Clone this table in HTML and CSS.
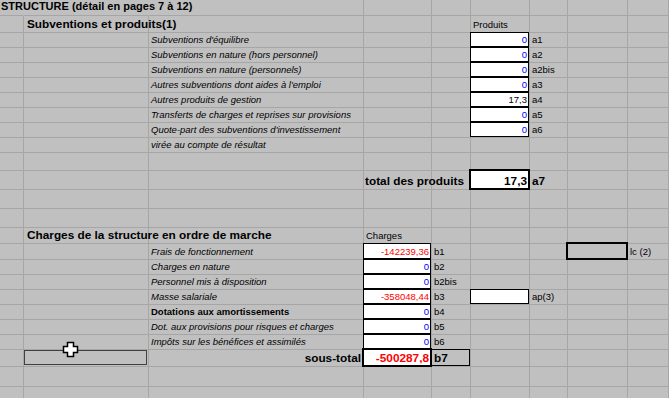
FILE: index.html
```html
<!DOCTYPE html>
<html lang="fr">

<head>
    <meta charset="UTF-8">
    <title>Structure - détail</title>
    <link rel="stylesheet" href="styles.css">
</head>

<body>

    <div class="page">
        <table class="sheet">
            <colgroup>
                <col style="width: 24px">
                <col style="width: 125px">
                <col style="width: 215px">
                <col style="width: 68px">
                <col style="width: 39px">
                <col style="width: 59px">
                <col style="width: 38px">
                <col style="width: 60px">
                <col style="width: 41px">
            </colgroup>

            <!-- en-tête -->
            <tr class="r16">
                <td class="title ov">STRUCTURE (détail en pages 7 à 12)</td>
                <td class="ov"></td><td></td><td></td><td></td><td></td><td></td><td></td><td></td>
            </tr>
            <tr class="r17">
                <td></td>
                <td class="head">Subventions et produits(1)</td>
                <td></td><td></td><td></td>
                <td>Produits</td>
                <td></td><td></td><td></td>
            </tr>

            <!-- produits -->
            <tr class="r15">
                <td></td><td></td>
                <td class="it">Subventions d'équilibre</td>
                <td></td><td></td>
                <td class="box num">0</td>
                <td>a1</td><td></td><td></td>
            </tr>
            <tr class="r15">
                <td></td><td></td>
                <td class="it">Subventions en nature (hors personnel)</td>
                <td></td><td></td>
                <td class="box num">0</td>
                <td>a2</td><td></td><td></td>
            </tr>
            <tr class="r15">
                <td></td><td></td>
                <td class="it">Subventions en nature (personnels)</td>
                <td></td><td></td>
                <td class="box num">0</td>
                <td>a2bis</td><td></td><td></td>
            </tr>
            <tr class="r15">
                <td></td><td></td>
                <td class="it">Autres subventions dont aides à l'emploi</td>
                <td></td><td></td>
                <td class="box num">0</td>
                <td>a3</td><td></td><td></td>
            </tr>
            <tr class="r15">
                <td></td><td></td>
                <td class="it">Autres produits de gestion</td>
                <td></td><td></td>
                <td class="box num pos">17,3</td>
                <td>a4</td><td></td><td></td>
            </tr>
            <tr class="r15">
                <td></td><td></td>
                <td class="it">Transferts de charges et reprises sur provisions</td>
                <td></td><td></td>
                <td class="box num">0</td>
                <td>a5</td><td></td><td></td>
            </tr>
            <tr class="r15">
                <td></td><td></td>
                <td class="it">Quote-part des subventions d'investissement</td>
                <td></td><td></td>
                <td class="box num">0</td>
                <td>a6</td><td></td><td></td>
            </tr>
            <tr class="r15">
                <td></td><td></td>
                <td class="it">virée au compte de résultat</td>
                <td></td><td></td><td></td><td></td><td></td><td></td>
            </tr>
            <tr class="r18">
                <td></td><td></td><td></td><td></td><td></td><td></td><td></td><td></td><td></td>
            </tr>
            <tr class="r19">
                <td></td><td></td><td></td><td></td>
                <td class="total sum-label"><div class="right">total des produits</div></td>
                <td class="box thick num total pos">17,3</td>
                <td class="total">a7</td>
                <td></td><td></td>
            </tr>
            <tr class="r19">
                <td></td><td></td><td></td><td></td><td></td><td></td><td></td><td></td><td></td>
            </tr>
            <tr class="r19">
                <td></td><td></td><td></td><td></td><td></td><td></td><td></td><td></td><td></td>
            </tr>

            <!-- charges -->
            <tr class="r16">
                <td></td>
                <td class="head">Charges de la structure en ordre de marche</td>
                <td></td>
                <td>Charges</td>
                <td></td><td></td><td></td><td></td><td></td>
            </tr>
            <tr class="r16">
                <td></td><td></td>
                <td class="it">Frais de fonctionnement</td>
                <td class="box num neg">-142239,36</td>
                <td>b1</td>
                <td></td><td></td>
                <td class="box thick grey"></td>
                <td>lc (2)</td>
            </tr>
            <tr class="r15">
                <td></td><td></td>
                <td class="it">Charges en nature</td>
                <td class="box num">0</td>
                <td>b2</td>
                <td></td><td></td><td></td><td></td>
            </tr>
            <tr class="r15">
                <td></td><td></td>
                <td class="it">Personnel mis à disposition</td>
                <td class="box num">0</td>
                <td>b2bis</td>
                <td></td><td></td><td></td><td></td>
            </tr>
            <tr class="r15">
                <td></td><td></td>
                <td class="it">Masse salariale</td>
                <td class="box num neg">-358048,44</td>
                <td>b3</td>
                <td class="box"></td>
                <td>ap(3)</td>
                <td></td><td></td>
            </tr>
            <tr class="r15">
                <td></td><td></td>
                <td class="strong">Dotations aux amortissements</td>
                <td class="box num">0</td>
                <td>b4</td>
                <td></td><td></td><td></td><td></td>
            </tr>
            <tr class="r15">
                <td></td><td></td>
                <td class="it">Dot. aux provisions pour risques et charges</td>
                <td class="box num">0</td>
                <td>b5</td>
                <td></td><td></td><td></td><td></td>
            </tr>
            <tr class="r15">
                <td></td><td></td>
                <td class="it">Impôts sur les bénéfices et assimilés</td>
                <td class="box num">0</td>
                <td>b6</td>
                <td></td><td></td><td></td><td></td>
            </tr>
            <tr class="r17">
                <td></td>
                <td class="sel"></td>
                <td class="total"><div class="right">sous-total</div></td>
                <td class="box thick num neg total">-500287,8</td>
                <td class="box label total">b7</td>
                <td></td><td></td><td></td><td></td>
            </tr>
            <tr class="r20">
                <td></td><td></td><td></td><td></td><td></td><td></td><td></td><td></td><td></td>
            </tr>
            <tr class="r20">
                <td></td><td></td><td></td><td></td><td></td><td></td><td></td><td></td><td></td>
            </tr>
        </table>

        <!-- pointeur de sélection -->
        <svg class="cursor" width="17" height="17" viewBox="0 0 17 17">
            <polygon points="5.5,1.5 11.5,1.5 11.5,5.5 15.5,5.5 15.5,11.5 11.5,11.5 11.5,15.5 5.5,15.5 5.5,11.5 1.5,11.5 1.5,5.5 5.5,5.5"
                fill="#fff" stroke="#000" stroke-width="1.5" stroke-linejoin="miter" />
        </svg>
    </div>

</body>

</html>
```

FILE: styles.css
```css
html,
body {
    margin: 0;
    overflow: hidden;
}

body {
    background-color: #c0c0c0;
    font-family: "Liberation Sans", Arial, sans-serif;
    color: #000;
}

.page {
    position: relative;
    width: 669px;
}

.sheet {
    width: 669px;
    table-layout: fixed;
    border-collapse: separate;
    border-spacing: 0;
}

.sheet td {
    position: relative;
    box-sizing: border-box;
    padding: 0 2px 2px;
    border-right: 1px solid #a6a6a6;
    border-bottom: 1px solid #a6a6a6;
    font-size: 9.5px;
    line-height: 11px;
    white-space: nowrap;
    vertical-align: bottom;
    overflow: visible;
}

/* hauteurs de lignes */
.r15 { height: 15px; }
.r16 { height: 16px; }
.r17 { height: 17px; }
.r18 { height: 18px; }
.r19 { height: 19px; }
.r20 { height: 20px; }

/* le texte déborde sur les cellules voisines */
.sheet td.ov {
    border-right-color: transparent;
}

.sheet td.title {
    padding: 0 1px;
    vertical-align: top;
    font-size: 11px;
    font-weight: bold;
    line-height: 13px;
}

.sheet td.head {
    padding-left: 3px;
    padding-bottom: 1px;
    font-size: 11.8px;
    font-weight: bold;
    line-height: 14px;
}

.sheet td.it {
    font-style: italic;
}

.sheet td.strong {
    font-weight: bold;
}

.sheet td.total {
    padding-bottom: 1px;
    font-size: 11.8px;
    font-weight: bold;
    line-height: 14px;
}

.sheet td.sum-label {
    padding-right: 6px;
}

.right {
    display: flex;
    justify-content: flex-end;
}

.sheet td.num {
    text-align: right;
    padding-right: 2px;
    color: #0000ff;
}

.sheet td.pos {
    color: #000;
}

.sheet td.neg {
    color: #ff0000;
}

/* cases de saisie */
.sheet td.box {
    background-color: #fff;
}

.sheet td.box::after {
    content: "";
    position: absolute;
    left: -1px;
    top: -1px;
    right: 0;
    bottom: 0;
    border: 1px solid #000;
    pointer-events: none;
}

.sheet td.thick::after {
    left: -2px;
    top: -2px;
    right: -1px;
    bottom: -1px;
    border-width: 2px;
}

.sheet td.grey,
.sheet td.label {
    background-color: transparent;
}

.sheet td.sel::after {
    content: "";
    position: absolute;
    left: 0;
    top: 0;
    right: 1px;
    bottom: 1px;
    border: 1px solid #404040;
}

.cursor {
    position: absolute;
    left: 62px;
    top: 341px;
}
```
